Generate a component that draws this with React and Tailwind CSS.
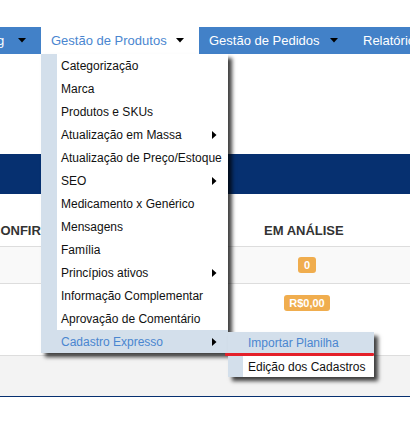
import React from "react";

const Down = () => (
  <svg width="8" height="5" viewBox="0 0 8 5" className="block"><path d="M0 0H8L4 4.5Z" fill="#000" /></svg>
);
const Right = () => (
  <svg width="5" height="8" viewBox="0 0 5 8" className="block"><path d="M0 0V8L4.5 4Z" fill="#000" /></svg>
);

const items = [
  ["Categorização"],
  ["Marca"],
  ["Produtos e SKUs"],
  ["Atualização em Massa", true],
  ["Atualização de Preço/Estoque"],
  ["SEO", true],
  ["Medicamento x Genérico"],
  ["Mensagens"],
  ["Família"],
  ["Princípios ativos", true],
  ["Informação Complementar"],
  ["Aprovação de Comentário"],
  ["Cadastro Expresso", true, true],
];

export default function App() {
  return (
    <div className="relative w-[410px] h-[424px] overflow-hidden bg-white text-[#111]" style={{ fontFamily: '"Liberation Sans", Arial, sans-serif' }}>
      <div className="h-[27px]" />
      {/* Nav bar */}
      <div className="h-[27px] bg-[#4281c8] flex items-center text-[13px] text-white whitespace-nowrap">
        <div className="flex items-center w-[41px] shrink-0 h-full">
          <span className="ml-[-3px] w-[21px] shrink-0">g</span>
          <Down />
        </div>
        <div className="flex items-center w-[158px] shrink-0 h-full bg-white text-[#4a86d0] pl-[10px]">
          <span className="w-[125px] shrink-0">Gestão de Produtos</span>
          <Down />
        </div>
        <div className="flex items-center shrink-0 h-full pl-[10px]">
          <span className="w-[121px] shrink-0">Gestão de Pedidos</span>
          <Down />
          <span className="ml-[25px]">Relatórios</span>
        </div>
      </div>
      <div className="h-[100px]" />
      <div className="h-[40px] bg-[#063070]" />
      {/* Table header */}
      <div className="h-[52px] flex text-[13px] font-bold text-[#333] whitespace-nowrap">
        <div className="w-[201px] shrink-0">
          <div className="w-[41px] overflow-hidden pt-[27px]">
            <div className="ml-[-9px]">CONFIRMADOS</div>
          </div>
        </div>
        <div className="flex-1 pt-[27px] pl-[63px]">EM ANÁLISE</div>
      </div>
      <div className="h-[37px] bg-[#f9f9f9] border-t border-[#dddddd] flex">
        <div className="w-[201px] shrink-0" />
        <div className="w-[212px] shrink-0 flex justify-center pt-[10px]">
          <span className="h-[16px] px-[6px] rounded-[3px] bg-[#f0ad4e] text-white text-[11px] font-bold leading-[16px]">0</span>
        </div>
      </div>
      <div className="h-[72px] border-t border-[#dddddd] flex">
        <div className="w-[201px] shrink-0" />
        <div className="w-[212px] shrink-0 flex justify-center pt-[11px]">
          <span className="h-[16px] px-[5px] rounded-[3px] bg-[#f0ad4e] text-white text-[11px] font-bold leading-[16px]">R$0,00</span>
        </div>
      </div>
      <div className="h-[42px] bg-[#f3f3f3] border-t border-[#dddddd] border-b border-b-[#063070]" />

      {/* Dropdown menu */}
      <div className="absolute left-[41px] top-[54px] w-[187px] bg-white text-[12px] shadow-[4px_4px_4px_rgba(0,0,0,0.75)]">
        <div className="absolute left-0 top-0 bottom-0 w-[16px] bg-[#d3dfeb]" />
        {items.map(([label, arrow, active]) => (
          <div key={label} className={`relative h-[23px] flex items-center pl-[20px] pr-[11px] whitespace-nowrap ${active ? "bg-[#d3dfeb] text-[#4a86d0]" : ""}`}>
            <span className="flex-1">{label}</span>
            {arrow && <Right />}
          </div>
        ))}
      </div>

      {/* Submenu */}
      <div className="absolute left-[228px] top-[332px] w-[146px] bg-white text-[12px] shadow-[4px_4px_4px_rgba(0,0,0,0.75)]">
        <div className="absolute left-0 top-0 bottom-0 w-[15px] bg-[#d3dfeb]" />
        <div className="relative h-[22px] flex items-center pl-[20px] bg-[#d3dfeb] text-[#4a86d0] whitespace-nowrap">Importar Planilha</div>
        <div className="relative h-[23px] flex items-center pl-[20px] pt-[2px] whitespace-nowrap">Edição dos Cadastros</div>
      </div>
      <div className="absolute left-[225px] top-[353px] w-[149px] h-[3px] bg-[#e4202a] rounded-[1px]" />
    </div>
  );
}
